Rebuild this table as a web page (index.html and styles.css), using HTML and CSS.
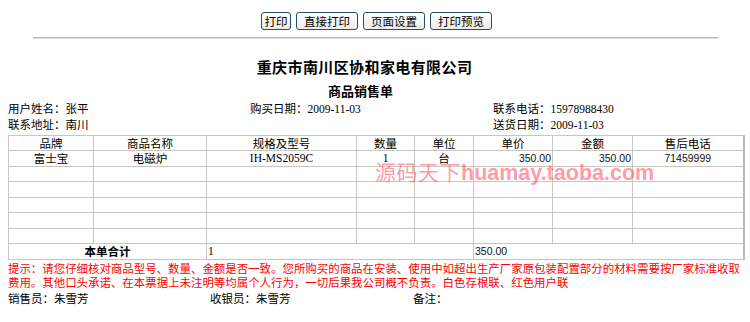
FILE: index.html
```html
<!DOCTYPE html>
<html lang="zh-CN">
<head>
<meta charset="utf-8">
<title>商品销售单</title>
<link rel="stylesheet" href="styles.css">
</head>
<body>
<div class="page">
  <div class="toolbar">
    <button class="btn">打印</button>
    <button class="btn">直接打印</button>
    <button class="btn">页面设置</button>
    <button class="btn">打印预览</button>
  </div>
  <div class="rule"></div>
  <h1 class="company">重庆市南川区协和家电有限公司</h1>
  <h2 class="doc-title">商品销售单</h2>
  <div class="info">
    <div>用户姓名：张平</div>
    <div>购买日期：2009-11-03</div>
    <div>联系电话：15978988430</div>
    <div>联系地址：南川</div>
    <div></div>
    <div>送货日期：2009-11-03</div>
  </div>
  <div class="table-wrap">
    <table class="goods">
      <colgroup>
        <col class="c1"><col class="c2"><col class="c3"><col class="c4">
        <col class="c5"><col class="c6"><col class="c7"><col class="c8">
      </colgroup>
      <tr>
        <td>品牌</td><td>商品名称</td><td>规格及型号</td><td>数量</td>
        <td>单位</td><td>单价</td><td>金额</td><td>售后电话</td>
      </tr>
      <tr>
        <td>富士宝</td><td>电磁炉</td><td class="serif">IH-MS2059C</td><td class="serif">1</td>
        <td>台</td><td class="num right">350.00</td><td class="num right">350.00</td><td class="num">71459999</td>
      </tr>
      <tr><td></td><td></td><td></td><td></td><td></td><td></td><td></td><td></td></tr>
      <tr><td></td><td></td><td></td><td></td><td></td><td></td><td></td><td></td></tr>
      <tr><td></td><td></td><td></td><td></td><td></td><td></td><td></td><td></td></tr>
      <tr><td></td><td></td><td></td><td></td><td></td><td></td><td></td><td></td></tr>
      <tr><td></td><td></td><td></td><td></td><td></td><td></td><td></td><td></td></tr>
      <tr>
        <td colspan="2" class="total-label">本单合计</td>
        <td colspan="3" class="serif left">1</td>
        <td colspan="3" class="num left">350.00</td>
      </tr>
    </table>
    <div class="watermark"><span class="wm-cn">源码天下</span><span class="wm-en">huamay.taoba.com</span></div>
  </div>
  <p class="notice">提示：请您仔细核对商品型号、数量、金额是否一致。您所购买的商品在安装、使用中如超出生产厂家原包装配置部分的材料需要按厂家标准收取费用。其他口头承诺、在本票据上未注明等均属个人行为，一切后果我公司概不负责。白色存根联、红色用户联</p>
  <div class="signs">
    <div>销售员：朱雪芳</div>
    <div>收银员：朱雪芳</div>
    <div>备注：</div>
  </div>
</div>
</body>
</html>
```
FILE: styles.css
```css
html, body {
  margin: 0;
  padding: 0;
  background: #ffffff;
}
body {
  font-family: "Liberation Serif", "Noto Sans CJK SC", serif;
  font-size: 11.5px;
  color: #000;
}
.page {
  width: 735px;
  padding: 12px 7px 0 8px;
}
.toolbar {
  display: flex;
  justify-content: center;
  gap: 5px;
  height: 18px;
  padding-left: 2px;
}
.btn {
  height: 18px;
  padding: 0 6px;
  margin: 0;
  font-family: "Noto Sans CJK SC", sans-serif;
  font-size: 11.5px;
  line-height: 16px;
  color: #000;
  background: linear-gradient(#ffffff, #ecebe6);
  border: 1px solid #2b4a6b;
  border-radius: 3px;
}
.btn:nth-child(1) { width: 30px; padding: 0; }
.btn:nth-child(2) { width: 62px; }
.btn:nth-child(3) { width: 62px; }
.btn:nth-child(4) { width: 62px; }
.rule {
  margin: 7px 25px 0 25px;
  height: 0;
  border-top: 1px solid #b4b2aa;
  border-bottom: 1px solid #e4e2da;
}
.company {
  margin: 18px 0 0 0;
  padding-right: 22px;
  text-align: center;
  font-family: "Noto Sans CJK SC", sans-serif;
  font-size: 15px;
  letter-spacing: 0.4px;
  line-height: 20px;
  font-weight: bold;
}
.doc-title {
  margin: 4px 0 0 0;
  padding-right: 30px;
  text-align: center;
  font-family: "Noto Sans CJK SC", sans-serif;
  font-size: 13px;
  line-height: 20px;
  font-weight: bold;
}
.info {
  display: grid;
  grid-template-columns: 242px 243px auto;
  line-height: 16px;
}
.table-wrap {
  position: relative;
  margin-top: 2px;
}
.goods {
  width: 735px;
  table-layout: fixed;
  border-collapse: collapse;
  border: 1px solid #bdbbb3;
  border-right: 2px solid #bdbbb3;
}
.goods td {
  border: 1px solid #c8c6be;
  height: 14.45px;
  padding: 0 1px;
  text-align: center;
  line-height: 13px;
  font-family: "Noto Sans CJK SC", sans-serif;
  font-size: 11.5px;
  white-space: nowrap;
  overflow: hidden;
}
.c1 { width: 85px; }
.c2 { width: 113px; }
.c3 { width: 150px; }
.c4 { width: 58px; }
.c5 { width: 59px; }
.c6 { width: 79px; }
.c7 { width: 80px; }
.c8 { width: 111px; }
.goods td.serif {
  font-family: "Liberation Serif", serif;
  font-size: 11.5px;
}
.goods td.num {
  font-family: "Liberation Sans", sans-serif;
  font-size: 10.5px;
  color: #111;
}
.goods td.right { text-align: right; }
.goods td.left { text-align: left; }
.goods td.total-label {
  font-weight: bold;
}
.watermark {
  position: absolute;
  left: 367px;
  top: 29px;
  line-height: 15px;
  white-space: nowrap;
  color: rgba(255, 70, 90, 0.55);
  pointer-events: none;
}
.wm-cn {
  font-family: "Noto Sans CJK SC", sans-serif;
  font-size: 21px;
  letter-spacing: 0.5px;
}
.wm-en {
  font-family: "Liberation Sans", sans-serif;
  font-weight: bold;
  font-size: 21.5px;
}
.notice {
  margin: 1px 0 0 0;
  color: #ff0000;
  font-family: "Noto Sans CJK SC", sans-serif;
  font-size: 11.45px;
  line-height: 14px;
}
.signs {
  display: grid;
  grid-template-columns: 202px 203px auto;
  margin-top: 2px;
  line-height: 14px;
  font-family: "Noto Sans CJK SC", sans-serif;
}
```
